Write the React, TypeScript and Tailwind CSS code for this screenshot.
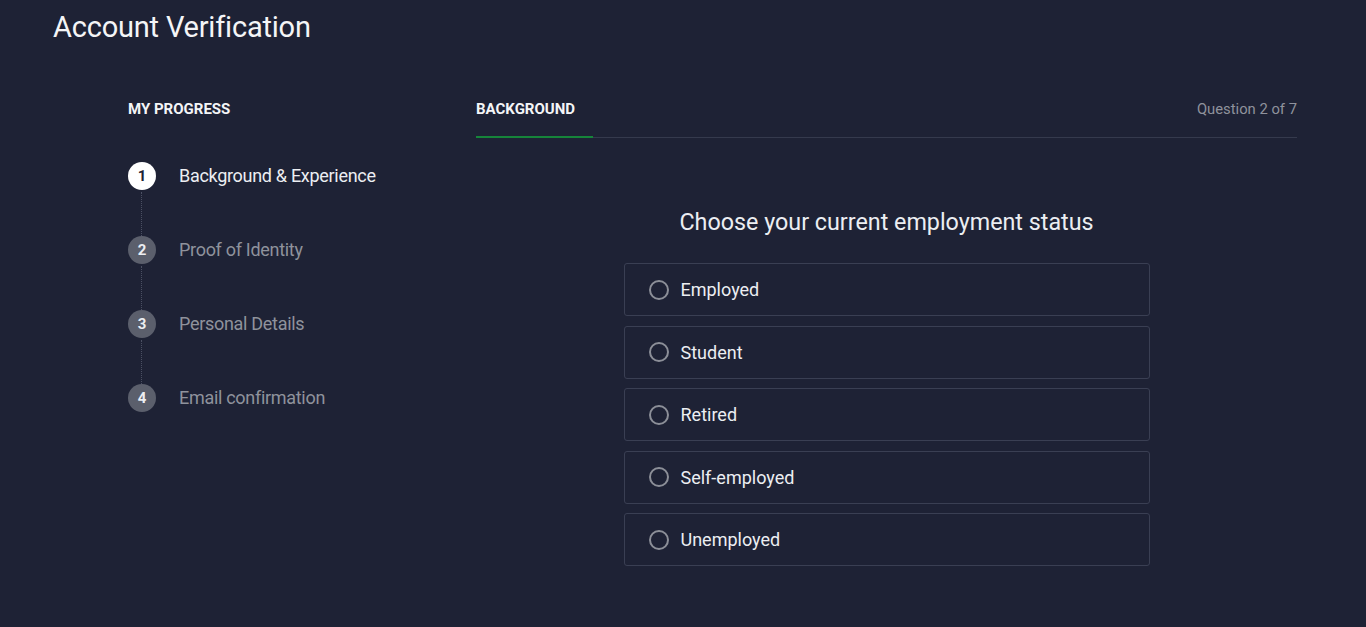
import { useState } from 'react';

const steps = [
  { n: 1, label: 'Background & Experience' },
  { n: 2, label: 'Proof of Identity' },
  { n: 3, label: 'Personal Details' },
  { n: 4, label: 'Email confirmation' },
];

const options = ['Employed', 'Student', 'Retired', 'Self-employed', 'Unemployed'];

export default function App() {
  const [current] = useState(1);
  const [selected, setSelected] = useState<string | null>(null);

  return (
    <div className="min-h-screen bg-[#1e2235] text-white font-['Roboto',sans-serif]">
      <div className="px-[53px] pt-[7px]">
        <h1 className="text-[29px] tracking-[-0.2px] leading-[40px] text-[#f4f5f7]">Account Verification</h1>
      </div>

      <div className="flex pl-[128px] pr-[69px] pt-[53px]">
        {/* Progress */}
        <div className="w-[348px] shrink-0">
          <h2 className="text-[15px] font-bold leading-[18px] text-[#f4f5f7]">MY PROGRESS</h2>
          <ol className="mt-[44px]">
            {steps.map((s, i) => (
              <li key={s.n} className="relative flex items-start h-[74px]">
                {i < steps.length - 1 && (
                  <span className="absolute left-[13px] top-[30px] h-[44px] border-l border-dotted border-[#4b5063]" />
                )}
                <span
                  className={`w-[28px] h-[28px] rounded-full flex items-center justify-center text-[15px] font-bold ${
                    s.n === current ? 'bg-white text-[#1e2235]' : 'bg-[#5b5f6c] text-[#eceef2]'
                  }`}
                >
                  {s.n}
                </span>
                <span
                  className={`ml-[23px] text-[18px] tracking-[-0.3px] leading-[28px] ${
                    s.n === current ? 'text-[#eceef2]' : 'text-[#8f929c]'
                  }`}
                >
                  {s.label}
                </span>
              </li>
            ))}
          </ol>
        </div>

        {/* Question */}
        <div className="flex-1">
          <div className="flex items-start justify-between border-b border-[#353a4d]">
            <div className="w-[117px] border-b-2 border-[#16853a] -mb-px pb-[18px]">
              <h2 className="text-[15px] font-bold leading-[18px] text-[#f4f5f7]">BACKGROUND</h2>
            </div>
            <span className="text-[14.8px] leading-[18px] text-[#8f929c]">Question 2 of 7</span>
          </div>

          <div className="flex flex-col items-center pt-[68px]">
            <h3 className="text-[23.3px] leading-[32px] text-[#eceef2]">Choose your current employment status</h3>
            <div className="mt-[25px] w-[526px] flex flex-col gap-[9.5px]">
              {options.map((o) => (
                <button
                  key={o}
                  onClick={() => setSelected(o)}
                  className="h-[53px] flex items-center px-[24px] border border-[#3a3f53] rounded-[3px] text-left"
                >
                  <span className="w-[20px] h-[20px] rounded-full border-2 border-[#8c8f98] flex items-center justify-center">
                    {selected === o && <span className="w-[8px] h-[8px] rounded-full bg-[#16853a]" />}
                  </span>
                  <span className="ml-[12px] text-[18px] text-[#eceef2]">{o}</span>
                </button>
              ))}
            </div>
          </div>
        </div>
      </div>
    </div>
  );
}
